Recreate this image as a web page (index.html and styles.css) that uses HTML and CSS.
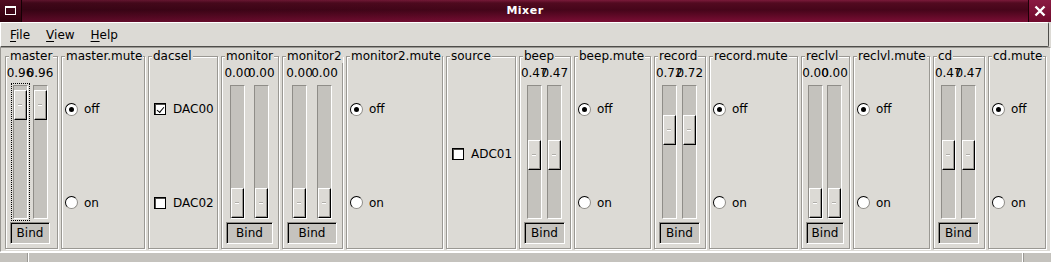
FILE: index.html
```html
<!DOCTYPE html>
<html lang="en">
<head>
  <meta charset="UTF-8" />
  <title>Mixer</title>
  <link rel="stylesheet" href="styles.css">
</head>
<body>
  <div class="window">
    <div class="titlebar">
      <div class="wm-icon">
        <svg width="12" height="10" viewBox="0 0 12 10"><rect x="0.5" y="0.5" width="10" height="8" fill="none" stroke="#fff"/><rect x="0" y="0" width="11" height="2" fill="#fff"/></svg>
      </div>
      <div class="title">Mixer</div>
      <div class="close">
        <svg width="12" height="12" viewBox="0 0 12 12"><path d="M1.5 1.5 L10.5 10.5 M10.5 1.5 L1.5 10.5" stroke="#fff" stroke-width="2.4"/></svg>
      </div>
    </div>

    <div class="menubar">
      <span class="menu"><u>F</u>ile</span>
      <span class="menu"><u>V</u>iew</span>
      <span class="menu"><u>H</u>elp</span>
    </div>

    <div class="mixer">
      <div class="group">
        <span class="group-label">master</span>
        <div class="strip tight">
          <div class="sliders">
            <div class="slider"><div class="value"><span>0.96</span></div><div class="trough focused"><div class="knob" style="top:4px"></div></div></div>
            <div class="slider"><div class="value"><span>0.96</span></div><div class="trough"><div class="knob" style="top:4px"></div></div></div>
          </div>
          <div class="bind">Bind</div>
        </div>
      </div>

      <div class="group">
        <span class="group-label">master.mute</span>
        <div class="choices">
          <div class="choice"><span class="radio checked"></span>off</div>
          <div class="choice"><span class="radio"></span>on</div>
        </div>
      </div>

      <div class="group">
        <span class="group-label">dacsel</span>
        <div class="choices">
          <div class="choice"><span class="check checked"></span>DAC00</div>
          <div class="choice"><span class="check"></span>DAC02</div>
        </div>
      </div>

      <div class="group">
        <span class="group-label">monitor</span>
        <div class="strip">
          <div class="sliders">
            <div class="slider"><div class="value"><span>0.00</span></div><div class="trough"><div class="knob" style="top:102px"></div></div></div>
            <div class="slider"><div class="value"><span>0.00</span></div><div class="trough"><div class="knob" style="top:102px"></div></div></div>
          </div>
          <div class="bind">Bind</div>
        </div>
      </div>

      <div class="group">
        <span class="group-label">monitor2</span>
        <div class="strip">
          <div class="sliders">
            <div class="slider"><div class="value"><span>0.00</span></div><div class="trough"><div class="knob" style="top:102px"></div></div></div>
            <div class="slider"><div class="value"><span>0.00</span></div><div class="trough"><div class="knob" style="top:102px"></div></div></div>
          </div>
          <div class="bind">Bind</div>
        </div>
      </div>

      <div class="group">
        <span class="group-label">monitor2.mute</span>
        <div class="choices">
          <div class="choice"><span class="radio checked"></span>off</div>
          <div class="choice"><span class="radio"></span>on</div>
        </div>
      </div>

      <div class="group">
        <span class="group-label">source</span>
        <div class="choices single">
          <div class="choice"><span class="check"></span>ADC01</div>
        </div>
      </div>

      <div class="group">
        <span class="group-label">beep</span>
        <div class="strip">
          <div class="sliders">
            <div class="slider"><div class="value"><span>0.47</span></div><div class="trough"><div class="knob" style="top:54px"></div></div></div>
            <div class="slider"><div class="value"><span>0.47</span></div><div class="trough"><div class="knob" style="top:54px"></div></div></div>
          </div>
          <div class="bind">Bind</div>
        </div>
      </div>

      <div class="group">
        <span class="group-label">beep.mute</span>
        <div class="choices">
          <div class="choice"><span class="radio checked"></span>off</div>
          <div class="choice"><span class="radio"></span>on</div>
        </div>
      </div>

      <div class="group">
        <span class="group-label">record</span>
        <div class="strip">
          <div class="sliders">
            <div class="slider"><div class="value"><span>0.72</span></div><div class="trough"><div class="knob" style="top:29px"></div></div></div>
            <div class="slider"><div class="value"><span>0.72</span></div><div class="trough"><div class="knob" style="top:29px"></div></div></div>
          </div>
          <div class="bind">Bind</div>
        </div>
      </div>

      <div class="group">
        <span class="group-label">record.mute</span>
        <div class="choices">
          <div class="choice"><span class="radio checked"></span>off</div>
          <div class="choice"><span class="radio"></span>on</div>
        </div>
      </div>

      <div class="group">
        <span class="group-label">reclvl</span>
        <div class="strip">
          <div class="sliders">
            <div class="slider"><div class="value"><span>0.00</span></div><div class="trough"><div class="knob" style="top:102px"></div></div></div>
            <div class="slider"><div class="value"><span>0.00</span></div><div class="trough"><div class="knob" style="top:102px"></div></div></div>
          </div>
          <div class="bind">Bind</div>
        </div>
      </div>

      <div class="group">
        <span class="group-label">reclvl.mute</span>
        <div class="choices">
          <div class="choice"><span class="radio checked"></span>off</div>
          <div class="choice"><span class="radio"></span>on</div>
        </div>
      </div>

      <div class="group">
        <span class="group-label">cd</span>
        <div class="strip">
          <div class="sliders">
            <div class="slider"><div class="value"><span>0.47</span></div><div class="trough"><div class="knob" style="top:54px"></div></div></div>
            <div class="slider"><div class="value"><span>0.47</span></div><div class="trough"><div class="knob" style="top:54px"></div></div></div>
          </div>
          <div class="bind">Bind</div>
        </div>
      </div>

      <div class="group">
        <span class="group-label">cd.mute</span>
        <div class="choices">
          <div class="choice"><span class="radio checked"></span>off</div>
          <div class="choice"><span class="radio"></span>on</div>
        </div>
      </div>
    </div>

    <div class="scrollbar">
      <div class="arrow"></div>
      <div class="thumb"></div>
      <div class="arrow"></div>
    </div>
  </div>
</body>
</html>
```

FILE: styles.css
```css
body {
  margin: 0;
  background: #dcdad5;
  font-family: "DejaVu Sans", sans-serif;
  font-size: 12px;
  color: #000;
}
.window {
  width: 1051px;
  height: 262px;
  overflow: hidden;
  display: flex;
  flex-direction: column;
}

/* title bar */
.titlebar {
  height: 22px;
  flex: none;
  display: flex;
  background:
    linear-gradient(90deg, rgba(0,0,0,0.25), rgba(0,0,0,0) 55%),
    linear-gradient(180deg, #7a1a3a 0, #520a20 3px, #46051a 45%, #7a0e34 100%);
}
.wm-icon {
  width: 21px;
  border-right: 1px solid #140004;
  display: flex;
  align-items: center;
  justify-content: center;
  background: linear-gradient(180deg, #520c22, #2e000c);
}
.title {
  flex: 1;
  text-align: center;
  color: #fff;
  font-weight: bold;
  font-size: 11px;
  line-height: 22px;
  letter-spacing: 0.5px;
}
.close {
  width: 22px;
  border-left: 1px solid #1c0006;
  display: flex;
  align-items: center;
  justify-content: center;
  background: linear-gradient(180deg, #8a1a42, #700a2c);
}

/* menu bar */
.menubar {
  height: 25px;
  flex: none;
  box-sizing: border-box;
  margin-right: 2px;
  border: 1px solid;
  border-color: #fff #4e4d4a #4e4d4a #fff;
  border-radius: 0 2px 2px 0;
  display: flex;
  align-items: center;
  padding-left: 1px;
}
.menu {
  padding: 0 8px;
  line-height: 16px;
}
.menu u {
  text-decoration-thickness: 1px;
  text-underline-offset: 2px;
}

/* mixer strips */
.mixer {
  height: 205px;
  flex: none;
  box-sizing: border-box;
  border: 1px solid;
  border-color: #9a9893 #fff #fff #9a9893;
  padding: 8px 0 0 4px;
  display: grid;
  grid-template-columns: 53px 84px 70px 58px 61px 97px 70px 52px 77px 52px 89px 49px 77px 52px 58px;
  column-gap: 3px;
  align-items: start;
}
.group {
  position: relative;
  height: 193px;
  box-sizing: border-box;
  border: 1px solid #9a9893;
  box-shadow: inset 1px 1px 0 #fff, 1px 1px 0 #fff;
}
.group-label {
  position: absolute;
  top: -8px;
  left: 3px;
  padding: 0 1px;
  line-height: 14px;
  background: #dcdad5;
  white-space: nowrap;
}

.strip {
  display: flex;
  flex-direction: column;
  padding: 9px 5px 0 4px;
}
.strip.tight {
  padding-right: 7px;
}
.sliders {
  display: flex;
}
.slider {
  flex: 1;
  display: flex;
  flex-direction: column;
  align-items: center;
}
.value {
  width: 15px;
  height: 15px;
  line-height: 15px;
  display: flex;
  justify-content: center;
  white-space: nowrap;
}
.trough {
  position: relative;
  width: 15px;
  height: 134px;
  margin-top: 4px;
  box-sizing: border-box;
  border: 1px solid;
  border-color: #8f8d88 #fff #fff #8f8d88;
  background: #c4c2bd;
}
.trough.focused {
  outline: 1px dotted #000;
  outline-offset: 1px;
}
.knob {
  position: absolute;
  left: 0;
  width: 13px;
  height: 30px;
  box-sizing: border-box;
  border: 1px solid;
  border-color: #fff #000 #000 #fff;
  box-shadow: inset -1px -1px 0 #9a9893;
  background: #dcdad5;
}
.knob::after {
  content: "";
  position: absolute;
  left: 3px;
  right: 4px;
  top: 13px;
  height: 1px;
  background: #b0aea9;
  box-shadow: 0 1px 0 #fff;
}
.bind {
  margin-top: 3px;
  height: 22px;
  box-sizing: border-box;
  border: 1px solid;
  border-color: #8f8d88 #fff #fff #8f8d88;
  box-shadow: inset 1px 1px 0 #000;
  background: #c5c3be;
  text-align: center;
  line-height: 20px;
}

/* radio / check groups */
.choices {
  height: 100%;
  box-sizing: border-box;
  padding: 6px 0 0 3px;
  display: grid;
  grid-template-rows: 1fr 1fr;
  align-items: center;
}
.choices.single {
  grid-template-rows: 1fr;
  padding-top: 2px;
}
.choice {
  display: flex;
  align-items: center;
  gap: 6px;
  line-height: 14px;
}
.choice + .choice {
  margin-top: 2px;
}
.radio {
  width: 13px;
  height: 13px;
  box-sizing: border-box;
  border-radius: 50%;
  border: 1px solid;
  border-color: #000 #8f8d88 #8f8d88 #000;
  background: #fff;
  position: relative;
}
.radio.checked::after {
  content: "";
  position: absolute;
  left: 3px;
  top: 3px;
  width: 5px;
  height: 5px;
  border-radius: 50%;
  background: #000;
}
.check {
  width: 12px;
  height: 12px;
  margin-left: 2px;
  margin-right: 1px;
  box-sizing: border-box;
  border: 1px solid #000;
  box-shadow: inset 1px 1px 0 #4e4d4a;
  background: #fff;
  position: relative;
}
.check.checked::after {
  content: "";
  position: absolute;
  left: 2px;
  top: 1px;
  width: 6px;
  height: 3px;
  border-left: 1px solid #000;
  border-bottom: 1px solid #000;
  transform: translate(0, 2px) rotate(-50deg);
}

/* bottom scrollbar */
.scrollbar {
  flex: 1;
  display: flex;
  border-top: 1px solid #fff;
  background: #c4c2bd;
}
.arrow {
  width: 28px;
  border-right: 1px solid #fff;
  box-shadow: inset -1px 0 0 #9a9893;
}
.arrow:last-child {
  border-right: none;
  border-left: 1px solid #fff;
  box-shadow: inset 1px 0 0 #9a9893;
}
.thumb {
  flex: 1;
}
```
